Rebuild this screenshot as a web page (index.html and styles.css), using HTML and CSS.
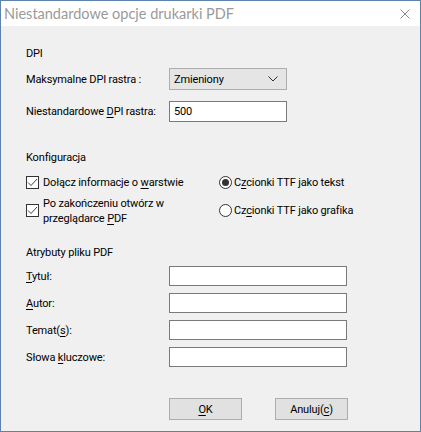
FILE: index.html
```html
<!DOCTYPE html>
<html lang="pl">
<head>
<meta charset="utf-8">
<link rel="stylesheet" href="styles.css">
</head>
<body>
<div class="window">
  <div class="titlebar">
    <span class="title">Niestandardowe opcje drukarki PDF</span>
    <svg class="close" width="10" height="10" viewBox="0 0 10 10"><path d="M0.5 0.5 L9.5 9.5 M9.5 0.5 L0.5 9.5" stroke="#8a8a8a" stroke-width="1" fill="none"/></svg>
  </div>
  <div class="content">
    <div class="section-title s-dpi">DPI</div>
    <div class="row r-combo">
      <span class="label">Maksymalne DPI rastra :</span>
      <div class="combo"><span>Zmieniony</span>
        <svg width="10" height="6" viewBox="0 0 10 6"><path d="M0.5 0.5 L5 5 L9.5 0.5" stroke="#333" fill="none"/></svg>
      </div>
    </div>
    <div class="row r-dpi">
      <span class="label">Niestandardowe <u>D</u>PI rastra:</span>
      <div class="edit short">500</div>
    </div>

    <div class="section-title s-konf">Konfiguracja</div>
    <div class="options">
      <div class="col">
        <div class="opt o1"><span class="check"><svg width="11" height="9" viewBox="0 0 11 9"><path d="M1 4.5 L4 7.5 L10 1" stroke="#444" stroke-width="1" fill="none"/></svg></span><span>Dołącz informacje o <u>w</u>arstwie</span></div>
        <div class="opt o2"><span class="check"><svg width="11" height="9" viewBox="0 0 11 9"><path d="M1 4.5 L4 7.5 L10 1" stroke="#444" stroke-width="1" fill="none"/></svg></span><span class="two">Po zakończeniu otwórz w<br>przeglądarce <u>P</u>DF</span></div>
      </div>
      <div class="col col2">
        <div class="opt o1"><span class="radio on"></span><span>C<u>z</u>cionki TTF jako tekst</span></div>
        <div class="opt o2"><span class="radio"></span><span>Cz<u>c</u>ionki TTF jako grafika</span></div>
      </div>
    </div>

    <div class="section-title s-attr">Atrybuty pliku PDF</div>
    <div class="attrs">
      <div class="row"><span class="label"><u>T</u>ytuł:</span><div class="edit long"></div></div>
      <div class="row"><span class="label"><u>A</u>utor:</span><div class="edit long"></div></div>
      <div class="row"><span class="label">Temat(<u>s</u>):</span><div class="edit long"></div></div>
      <div class="row"><span class="label">Słowa <u>k</u>luczowe:</span><div class="edit long"></div></div>
    </div>

    <div class="buttons">
      <div class="btn"><u>O</u>K</div>
      <div class="btn">Anuluj(<u>c</u>)</div>
    </div>
  </div>
</div>
</body>
</html>
```

FILE: styles.css
```css
* { box-sizing: border-box; }
html, body { margin: 0; padding: 0; background: #f0f0f0; }
body { font-family: "Segoe UI", Roboto, "Liberation Sans", sans-serif; font-size: 11px; letter-spacing: -0.15px; color: #000; }
u { text-decoration: underline; text-underline-offset: 2px; text-decoration-thickness: 1px; }

.window {
  width: 421px; height: 432px;
  border: 1px solid #5d83ad;
  background: #f0f0f0;
  display: flex; flex-direction: column;
}
.titlebar {
  height: 25px; flex: none;
  background: #fff;
  display: flex; align-items: center; justify-content: space-between;
  padding: 0 10px 0 3px;
}
.title { font-family: "Segoe UI", Lato, sans-serif; font-size: 14.5px; letter-spacing: 0; color: #9a9a9a; }
.close { display: block; margin-top: 1px; }

.content { padding: 0 0 0 25px; flex: 1; }
.section-title { height: 15px; line-height: 15px; white-space: nowrap; }
.s-dpi { margin-top: 20px; }
.row { display: flex; align-items: center; }
.label { width: 143px; flex: none; line-height: 15px; white-space: nowrap; }
.r-combo { margin-top: 7px; height: 22px; }
.combo {
  width: 118px; height: 22px;
  background: #e5e5e5; border: 1px solid #adadad;
  display: flex; align-items: center; justify-content: space-between;
  padding: 0 8px 0 4px;
}
.combo svg { display: block; }
.r-dpi { margin-top: 11px; height: 21px; }
.edit { height: 21px; background: #fff; border: 1px solid #7a7a7a; padding: 0 4px; line-height: 19px; }
.short { width: 118px; }
.long { width: 178px; height: 20px; }

.s-konf { margin-top: 28px; }
.options { display: flex; margin-top: 11px; }
.col { width: 193px; flex: none; }
.opt { display: flex; align-items: center; height: 13px; white-space: nowrap; }
.opt.o2 { margin-top: 15px; }
.check {
  width: 13px; height: 13px; flex: none;
  border: 1px solid #333; background: #fff;
  display: flex; align-items: center; justify-content: center;
  margin-right: 4px;
}
.check svg { display: block; }
.two { line-height: 15px; }
.radio {
  width: 13px; height: 13px; flex: none; border-radius: 50%;
  border: 1px solid #333; background: #fff; margin-right: 2px;
  display: flex; align-items: center; justify-content: center;
}
.radio.on::after { content: ""; width: 7px; height: 7px; border-radius: 50%; background: #333; }

.s-attr { margin-top: 28px; }
.attrs { margin-top: 6px; display: flex; flex-direction: column; gap: 7px; }
.attrs .row { height: 20px; }

.buttons { display: flex; gap: 33px; margin-top: 31px; padding-left: 143px; }
.btn {
  width: 73px; height: 22px;
  background: #e1e1e1; border: 1px solid #adadad;
  display: flex; align-items: center; justify-content: center;
}
```
